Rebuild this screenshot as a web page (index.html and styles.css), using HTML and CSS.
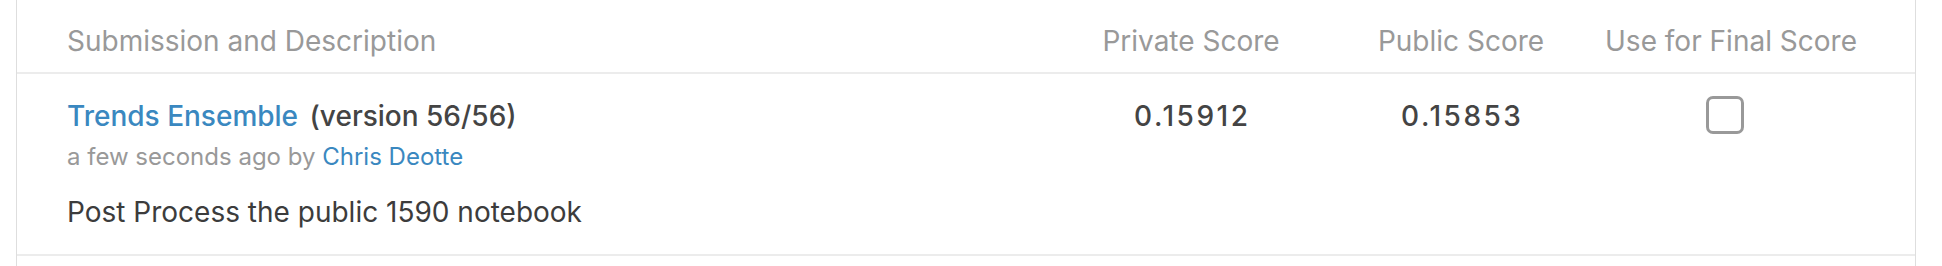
FILE: index.html
```html
<!DOCTYPE html>
<html lang="en">
<head>
  <meta charset="UTF-8" />
  <meta name="viewport" content="width=device-width, initial-scale=1.0"/>
  <title>Submissions</title>
  <link rel="stylesheet" href="styles.css">
</head>
<body>
  <div class="submissions">
    <div class="sub-row sub-head">
      <div class="col-desc">Submission and Description</div>
      <div class="col-score">Private Score</div>
      <div class="col-score">Public Score</div>
      <div class="col-score">Use for Final Score</div>
    </div>

    <div class="sub-row sub-item">
      <div class="col-desc">
        <div class="sub-title">
          <a href="#">Trends Ensemble</a>
          <span class="version">(version 56/56)</span>
        </div>
        <div class="sub-meta">a few seconds ago by <a href="#">Chris Deotte</a></div>
        <div class="sub-text">Post Process the public 1590 notebook</div>
      </div>
      <div class="col-score score">0.15912</div>
      <div class="col-score score">0.15853</div>
      <div class="col-score">
        <span class="checkbox"></span>
      </div>
    </div>
  </div>
</body>
</html>
```

FILE: styles.css
```css
/* Base Styles */
body {
  font-family: Inter, 'Noto Sans', sans-serif;
  background-color: #fff;
  color: #3c3c3c;
  margin: 0;
  padding: 0;
}

a {
  color: #3a88c0;
  text-decoration: none;
}

.submissions {
  margin: 0 26px 0 16px;
  border-left: 1px solid #dedede;
  border-right: 1px solid #dedede;
  min-height: 266px;
}

.sub-row {
  display: grid;
  grid-template-columns: 1fr 270px 270px 270px;
  padding: 0 49px 0 50px;
  border-bottom: 2px solid #ececec;
}

.col-score {
  text-align: center;
}

/* Header */
.sub-head {
  padding-top: 21px;
  padding-bottom: 11px;
  font-size: 28px;
  line-height: 40px;
  color: #999;
}

/* Row */
.sub-item {
  padding-top: 22px;
  padding-bottom: 22px;
  align-items: start;
}

.sub-title {
  font-size: 28px;
  line-height: 40px;
  font-weight: 500;
}

.sub-title .version {
  margin-left: 4px;
  color: #444;
}

.sub-meta {
  margin-top: 1px;
  font-size: 24px;
  line-height: 40px;
  color: #999;
}

.sub-text {
  margin-top: 15px;
  font-size: 28px;
  line-height: 40px;
  color: #3c3c3c;
}

.score {
  font-size: 28px;
  line-height: 40px;
  font-weight: 500;
  letter-spacing: 2.5px;
  text-indent: 2.5px;
  color: #444;
}

.checkbox {
  display: inline-block;
  box-sizing: border-box;
  width: 38px;
  height: 38px;
  border: 3px solid #999;
  border-radius: 7px;
  margin-left: -12px;
}
```
